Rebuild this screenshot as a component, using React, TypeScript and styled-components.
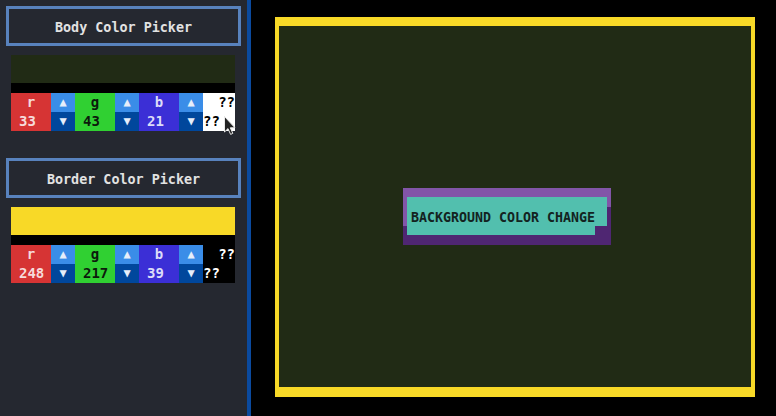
import React from 'react';
import styled, { createGlobalStyle } from 'styled-components';

type Rgb = { r: number; g: number; b: number };

const GlobalStyle = createGlobalStyle`
  html, body {
    margin: 0;
    padding: 0;
    background: #000;
  }
  body {
    font-family: 'DejaVu Sans Mono', 'Liberation Mono', monospace;
  }
`;

const body: Rgb = { r: 33, g: 43, b: 21 };
const border: Rgb = { r: 248, g: 217, b: 39 };
const toCss = (c: Rgb) => `rgb(${c.r}, ${c.g}, ${c.b})`;

const ColorPicker: React.FC<{ title: string; color: Rgb; light?: boolean; cursor?: boolean }> = ({
  title,
  color,
  light,
  cursor,
}) => (
  <Section>
    <TitleBox>{title}</TitleBox>
    <Picker>
      <Preview style={{ background: toCss(color) }} />
      <Gap />
      <Grid>
        <Channel tone="r">r</Channel>
        <Arrow up>▲</Arrow>
        <Channel tone="g">g</Channel>
        <Arrow up>▲</Arrow>
        <Channel tone="b">b</Channel>
        <Arrow up>▲</Arrow>
        <Hex light={light} align="right">??</Hex>
        <Value tone="r">{color.r}</Value>
        <Arrow>▼</Arrow>
        <Value tone="g">{color.g}</Value>
        <Arrow>▼</Arrow>
        <Value tone="b">{color.b}</Value>
        <Arrow>▼</Arrow>
        <Hex light={light} align="left">??</Hex>
      </Grid>
      {cursor && (
        <Cursor width="12" height="19" viewBox="0 0 12 19">
          <path d="M0.5 0.5 L0.5 16 L4 12.6 L6.6 18.4 L8.8 17.4 L6.3 11.8 L11 11.8 Z" fill="#222" stroke="#e8e8e8" strokeWidth="1" />
        </Cursor>
      )}
    </Picker>
  </Section>
);

const App: React.FC = () => (
  <Page>
    <GlobalStyle />
    <Sidebar>
      <ColorPicker title="Body Color Picker" color={body} light cursor />
      <ColorPicker title="Border Color Picker" color={border} />
    </Sidebar>
    <Main>
      <Frame>
        <Stage style={{ background: toCss(body) }}>
          <ChangeBox>
            <ChangeLabel>BACKGROUND COLOR CHANGE</ChangeLabel>
          </ChangeBox>
        </Stage>
      </Frame>
    </Main>
  </Page>
);

const Page = styled.div`
  display: flex;
  width: 776px;
  height: 416px;
  overflow: hidden;
  background: #000;
`;

const Sidebar = styled.aside`
  width: 241px;
  flex-shrink: 0;
  background: #252830;
  border-right: 4px solid #0b4a9e;
  padding: 6px 0 0 6px;
  display: flex;
  flex-direction: column;
  gap: 27px;
`;

const Section = styled.section`
  display: flex;
  flex-direction: column;
`;

const TitleBox = styled.div`
  width: 235px;
  height: 40px;
  box-sizing: border-box;
  border: 3px solid #5882bd;
  padding-top: 2px;
  display: flex;
  align-items: center;
  justify-content: center;
  color: #e2e2e2;
  font-weight: bold;
  font-size: 13.4px;
`;

const Picker = styled.div`
  position: relative;
  width: 224px;
  margin: 9px 0 0 5px;
`;

const Preview = styled.div`
  height: 28px;
`;

const Gap = styled.div`
  height: 10px;
  background: #000;
`;

const Grid = styled.div`
  display: grid;
  grid-template-columns: 40px 24px 40px 24px 40px 24px 32px;
  grid-template-rows: 19px 19px;
  font-size: 14px;
  font-weight: bold;
  line-height: 19px;
`;

const tones = {
  r: { bg: '#d63434', fg: '#f6dada' },
  g: { bg: '#30d032', fg: '#0c1a0c' },
  b: { bg: '#3b2fd6', fg: '#dcdcf8' },
};

const Channel = styled.div<{ tone: keyof typeof tones }>`
  background: ${({ tone }) => tones[tone].bg};
  color: ${({ tone }) => tones[tone].fg};
  text-align: center;
`;

const Value = styled.div<{ tone: keyof typeof tones }>`
  background: ${({ tone }) => tones[tone].bg};
  color: ${({ tone }) => tones[tone].fg};
  padding-left: 8px;
`;

const Arrow = styled.div<{ up?: boolean }>`
  background: ${({ up }) => (up ? '#3a8de8' : '#00479c')};
  color: #e6eefa;
  text-align: center;
  font-size: 12px;
`;

const Hex = styled.div<{ light?: boolean; align: 'left' | 'right' }>`
  background: ${({ light }) => (light ? '#fff' : '#000')};
  color: ${({ light }) => (light ? '#000' : '#fff')};
  text-align: ${({ align }) => align};
`;

const Cursor = styled.svg`
  position: absolute;
  left: 213px;
  top: 61px;
`;

const Main = styled.main`
  flex: 1;
  padding: 17px 0 0 24px;
`;

const Frame = styled.div`
  width: 480px;
  height: 380px;
  box-sizing: border-box;
  border-style: solid;
  border-color: #f8d927;
  border-width: 9px 4px 10px 4px;
`;

const Stage = styled.div`
  height: 100%;
  padding: 162px 0 0 124px;
  box-sizing: border-box;
`;

const ChangeBox = styled.div`
  position: relative;
  width: 208px;
  height: 57px;
  box-sizing: border-box;
  padding: 9px 4px 0 4px;
  background: #4f2672;

  &::before {
    content: '';
    position: absolute;
    left: 0;
    top: 0;
    right: 0;
    height: 19px;
    background: #8255a8;
  }

  &::after {
    content: '';
    position: absolute;
    left: 0;
    top: 0;
    width: 4px;
    height: 38px;
    background: #8255a8;
  }
`;

const ChangeLabel = styled.div`
  position: relative;
  z-index: 1;
  height: 29px;
  background: #52bfae;
  color: #13231f;
  font-weight: bold;
  font-size: 13.3px;
  line-height: 41px;
  padding-left: 4px;
  white-space: nowrap;

  &::after {
    content: '';
    position: absolute;
    left: 0;
    top: 29px;
    width: 188px;
    height: 9px;
    background: #52bfae;
    z-index: -1;
  }
`;

export default App;
